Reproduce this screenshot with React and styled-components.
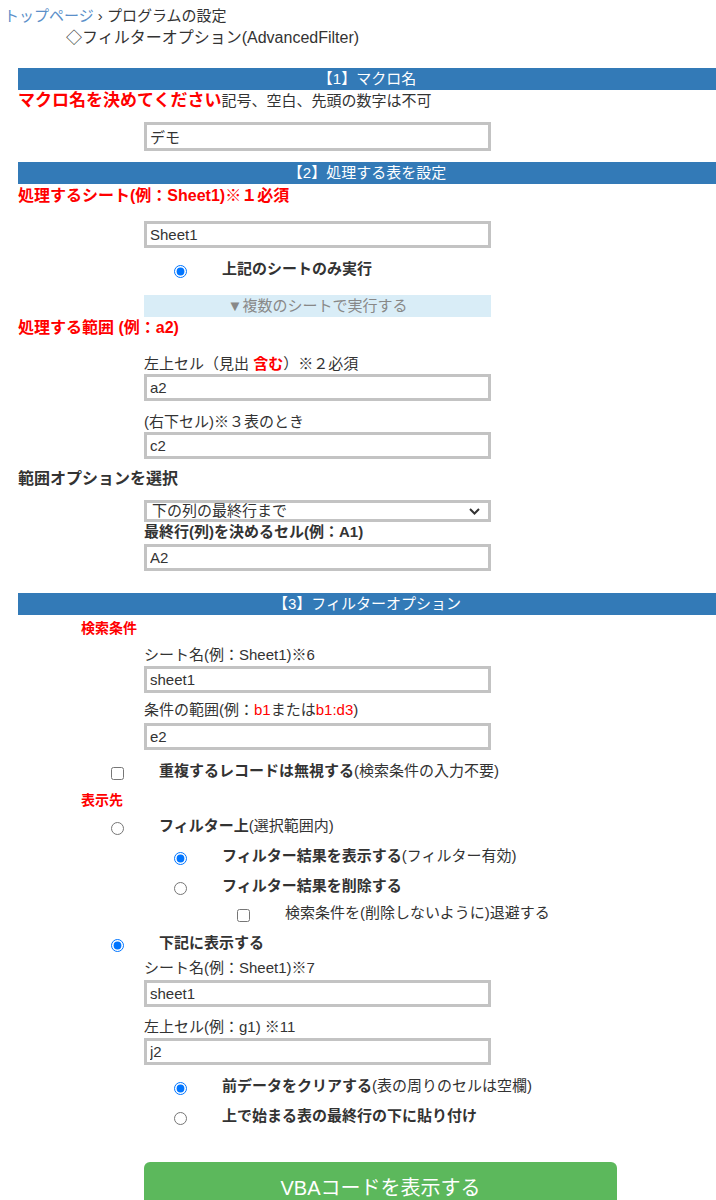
import React from 'react'
import styled, { createGlobalStyle } from 'styled-components'

const GlobalStyle = createGlobalStyle`
  body {
    margin: 0;
    background: #fff;
    font-family: "Liberation Sans", "Noto Sans CJK JP", sans-serif;
    color: #333;
  }
`

const Page = styled.div`
  width: 716px;
  padding-top: 5px;
  padding-bottom: 40px;
`

const Crumbs = styled.div`
  padding-left: 4px;
  font-size: 15px;
  line-height: 22px;
  color: #333;
`

const CrumbLink = styled.a`
  color: #5b8fc9;
  text-decoration: none;
`

const CrumbSub = styled.div`
  padding-left: 62px;
  font-size: 16px;
`

const Form = styled.div`
  margin-left: 18px;
  margin-top: 19px;
`

const SectionBar = styled.div`
  margin-top: ${p => p.$mt || 0}px;
  height: 22px;
  background: #337ab7;
  color: #fff;
  font-size: 15px;
  line-height: 22px;
  text-align: center;
`

const Lead = styled.div`
  margin-top: ${p => p.$mt || 0}px;
  padding-left: ${p => p.$indent || 0}px;
  font-size: ${p => p.$size || 15}px;
  line-height: 22px;
  font-weight: bold;
  color: ${p => (p.$plain ? '#333' : '#ff0000')};
  white-space: nowrap;
`

const Plain = styled.span`
  font-weight: normal;
  font-size: 15px;
  color: #333;
`

const Red = styled.span`
  color: #ff0000;
  font-weight: ${p => (p.$bold ? 'bold' : 'normal')};
`

const Field = styled.div`
  margin-top: ${p => p.$mt || 0}px;
  padding-left: 126px;
`

const FieldLabel = styled.div`
  font-size: 15px;
  line-height: 20px;
  color: #333;
  font-weight: ${p => (p.$bold ? 'bold' : 'normal')};
  margin-bottom: ${p => p.$mb || 0}px;
`

const TextBox = styled.input`
  display: block;
  box-sizing: border-box;
  width: 347px;
  height: ${p => p.$h || 27}px;
  border: 3px solid #c3c3c3;
  padding: 0 3px;
  font-family: "Liberation Sans", "Noto Sans CJK JP", sans-serif;
  font-size: 15px;
  color: #333;
  background: #fff;
  outline: none;
`

const SelectWrap = styled.div`
  position: relative;
  width: 347px;
`

const SelectBox = styled.select`
  display: block;
  box-sizing: border-box;
  width: 347px;
  height: 22px;
  border: 3px solid #c3c3c3;
  border-radius: 0;
  padding: 0 5px;
  appearance: none;
  font-family: "Liberation Sans", "Noto Sans CJK JP", sans-serif;
  font-size: 15px;
  line-height: 16px;
  color: #333;
  background: #fff;
`

const Chevron = styled.svg`
  position: absolute;
  right: 11px;
  top: 8px;
  pointer-events: none;
`

const ToggleBar = styled.div`
  margin-top: ${p => p.$mt || 0}px;
  margin-left: 126px;
  width: 347px;
  height: 22px;
  background: #d9edf7;
  color: #888;
  font-size: 15px;
  line-height: 22px;
  text-align: center;
`

const OptionRow = styled.label`
  display: flex;
  align-items: center;
  margin-top: ${p => p.$mt || 0}px;
  padding-left: ${p => 93 + (p.$level - 1) * 63}px;
  height: 22px;
  font-size: 15px;
  color: #333;
  white-space: nowrap;
`

const Toggle = styled.input`
  flex: none;
  width: 13px;
  height: 13px;
  margin: 5px 35px 0 0;
`

const OptionText = styled.span`
  font-weight: ${p => (p.$bold ? 'bold' : 'normal')};
  line-height: 22px;
`

const ShowButton = styled.button`
  display: block;
  margin-top: ${p => p.$mt || 0}px;
  margin-left: 126px;
  width: 473px;
  height: 48px;
  border: none;
  border-radius: 6px;
  background: #5cb85c;
  color: #fff;
  font-family: "Liberation Sans", "Noto Sans CJK JP", sans-serif;
  font-size: 20px;
`

const Option = ({ level, type = 'radio', name, checked, mt, children }) => (
  <OptionRow $level={level} $mt={mt}>
    <Toggle type={type} name={name} defaultChecked={checked} />
    {children}
  </OptionRow>
)

const App = () => {
  return (
    <Page>
      <GlobalStyle />
      <Crumbs>
        <div>
          <CrumbLink href="#">トップページ</CrumbLink> › プログラムの設定
        </div>
        <CrumbSub>◇フィルターオプション(AdvancedFilter)</CrumbSub>
      </Crumbs>

      <Form>
        <SectionBar>【1】マクロ名</SectionBar>
        <Lead $size={17}>
          マクロ名を決めてください<Plain>記号、空白、先頭の数字は不可</Plain>
        </Lead>
        <Field $mt={10}>
          <TextBox defaultValue="デモ" $h={29} />
        </Field>

        <SectionBar $mt={11}>【2】処理する表を設定</SectionBar>
        <Lead $size={16} $mt={1}>処理するシート(例：Sheet1)※１必須</Lead>
        <Field $mt={14}>
          <TextBox defaultValue="Sheet1" />
        </Field>
        <Option level={2} name="sheet" checked mt={10}>
          <OptionText $bold>上記のシートのみ実行</OptionText>
        </Option>
        <ToggleBar $mt={15}>▼複数のシートで実行する</ToggleBar>
        <Lead $size={16}>処理する範囲 (例：a2)</Lead>
        <Field $mt={15}>
          <FieldLabel>
            左上セル（見出 <Red $bold>含む</Red>）※２必須
          </FieldLabel>
          <TextBox defaultValue="a2" />
        </Field>
        <Field $mt={11}>
          <FieldLabel>(右下セル)※３表のとき</FieldLabel>
          <TextBox defaultValue="c2" />
        </Field>
        <Lead $plain $size={16} $mt={9}>範囲オプションを選択</Lead>
        <Field $mt={10}>
          <SelectWrap>
            <SelectBox defaultValue="last">
              <option value="last">下の列の最終行まで</option>
              <option value="range">指定した範囲</option>
            </SelectBox>
            <Chevron width="11" height="7" viewBox="0 0 11 7">
              <path d="M1 1l4.5 4.5L10 1" fill="none" stroke="#333" strokeWidth="2" />
            </Chevron>
          </SelectWrap>
          <FieldLabel $bold $mb={2}>最終行(列)を決めるセル(例：A1)</FieldLabel>
          <TextBox defaultValue="A2" />
        </Field>

        <SectionBar $mt={22}>【3】フィルターオプション</SectionBar>
        <Lead $size={14} $indent={63} $mt={2}>検索条件</Lead>
        <Field $mt={6}>
          <FieldLabel $mb={1}>シート名(例：Sheet1)※6</FieldLabel>
          <TextBox defaultValue="sheet1" />
        </Field>
        <Field $mt={7}>
          <FieldLabel $mb={3}>
            条件の範囲(例：<Red>b1</Red>または<Red>b1:d3</Red>)
          </FieldLabel>
          <TextBox defaultValue="e2" />
        </Field>
        <Option level={1} type="checkbox" mt={10}>
          <OptionText $bold>重複するレコードは無視する</OptionText>
          <OptionText>(検索条件の入力不要)</OptionText>
        </Option>
        <Lead $size={14} $indent={63} $mt={7}>表示先</Lead>
        <Option level={1} name="dest" mt={4}>
          <OptionText $bold>フィルター上</OptionText>
          <OptionText>(選択範囲内)</OptionText>
        </Option>
        <Option level={2} name="filter" checked mt={8}>
          <OptionText $bold>フィルター結果を表示する</OptionText>
          <OptionText>(フィルター有効)</OptionText>
        </Option>
        <Option level={2} name="filter" mt={8}>
          <OptionText $bold>フィルター結果を削除する</OptionText>
        </Option>
        <Option level={3} type="checkbox" mt={5}>
          <OptionText>検索条件を(削除しないように)退避する</OptionText>
        </Option>
        <Option level={1} name="dest" checked mt={8}>
          <OptionText $bold>下記に表示する</OptionText>
        </Option>
        <Field $mt={4}>
          <FieldLabel $mb={2}>シート名(例：Sheet1)※7</FieldLabel>
          <TextBox defaultValue="sheet1" />
        </Field>
        <Field $mt={10}>
          <FieldLabel $mb={1}>左上セル(例：g1) ※11</FieldLabel>
          <TextBox defaultValue="j2" />
        </Field>
        <Option level={2} name="paste" checked mt={10}>
          <OptionText $bold>前データをクリアする</OptionText>
          <OptionText>(表の周りのセルは空欄)</OptionText>
        </Option>
        <Option level={2} name="paste" mt={8}>
          <OptionText $bold>上で始まる表の最終行の下に貼り付け</OptionText>
        </Option>
        <ShowButton $mt={35}>VBAコードを表示する</ShowButton>
      </Form>
    </Page>
  )
}

export default App
